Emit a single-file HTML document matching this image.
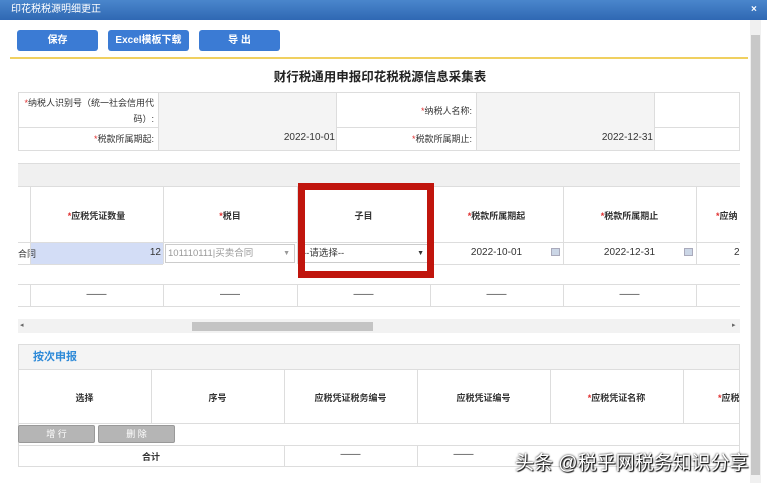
<!DOCTYPE html>
<html><head><meta charset="utf-8"><style>
*{margin:0;padding:0;box-sizing:border-box}
body{width:767px;height:483px;overflow:hidden;background:#fff;font-family:"Liberation Sans","Noto Sans CJK SC",sans-serif;font-size:10px;color:#333;position:relative}
.a{position:absolute}
.btn{position:absolute;top:30px;height:21px;background:#3b7bd4;color:#fff;border-radius:3px;text-align:center;line-height:21px;font-size:10px;font-weight:bold}
.r{color:#e03030}
.hl{position:absolute;height:1px;background:#ddd}
.v{position:absolute;width:1px;background:#ddd}
.g{position:absolute;background:#b5b5b5;border:1px solid #999;border-radius:2px;color:#fff;font-size:9px;text-align:center;line-height:16px}
</style></head><body>
<div class="a" style="left:0;top:0;width:767px;height:20px;background:linear-gradient(#4a86cc,#2f68b3);color:#fff;font-size:10px;line-height:19px;padding-left:11px">印花税税源明细更正<span class="a" style="left:751px;top:0;font-weight:bold">×</span></div>
<div class="btn" style="left:17px;width:81px">保存</div>
<div class="btn" style="left:108px;width:81px">Excel模板下载</div>
<div class="btn" style="left:199px;width:81px">导 出</div>
<div class="a" style="left:10px;top:57px;width:738px;height:2px;background:#f0d060"></div>
<div class="a" style="left:750px;top:20px;width:11px;height:463px;background:#f0f0f0"></div>
<div class="a" style="left:751px;top:35px;width:9px;height:440px;background:#c8c8c8"></div>
<div class="a" style="left:0;top:66px;width:760px;text-align:center;font-size:12.5px;font-weight:bold;color:#222">财行税通用申报印花税税源信息采集表</div>
<!-- info table -->
<div class="a" style="left:18px;top:92px;width:722px;height:59px;border:1px solid #ddd"></div>
<div class="hl" style="left:18px;top:127px;width:722px"></div>
<div class="a" style="left:158px;top:93px;width:179px;height:57px;background:#f4f4f4;border-left:1px solid #ddd;border-right:1px solid #ddd"></div>
<div class="a" style="left:476px;top:93px;width:179px;height:57px;background:#f4f4f4;border-left:1px solid #ddd;border-right:1px solid #ddd"></div>
<div class="a" style="left:20px;top:95px;width:134px;text-align:right;line-height:16px;font-size:9px"><span class="r">*</span>纳税人识别号（统一社会信用代码）:</div>
<div class="a" style="left:20px;top:132px;width:134px;text-align:right;font-size:9px"><span class="r">*</span>税款所属期起:</div>
<div class="a" style="left:340px;top:104px;width:132px;text-align:right;font-size:9px"><span class="r">*</span>纳税人名称:</div>
<div class="a" style="left:340px;top:132px;width:132px;text-align:right;font-size:9px"><span class="r">*</span>税款所属期止:</div>
<div class="a" style="left:160px;top:132px;width:175px;text-align:right;font-size:10px">2022-10-01</div>
<div class="a" style="left:478px;top:132px;width:175px;text-align:right;font-size:10px">2022-12-31</div>
<!-- main grid -->
<div class="a" style="left:18px;top:163px;width:722px;height:23px;background:#f0f0f0;border-top:1px solid #ddd"></div>
<div class="hl" style="left:18px;top:186px;width:722px"></div>
<div class="hl" style="left:18px;top:242px;width:722px"></div>
<div class="hl" style="left:430px;top:264px;width:310px"></div>
<div class="hl" style="left:18px;top:264px;width:145px"></div>
<div class="hl" style="left:18px;top:284px;width:722px"></div>
<div class="hl" style="left:18px;top:306px;width:722px"></div>
<div class="a" style="left:30px;top:243px;width:133px;height:21px;background:#d3ddf6"></div>
<div class="a" style="left:18px;top:247px;font-size:9px">合同</div>
<div class="a" style="left:30px;top:247px;width:131px;text-align:right;font-size:10px">12</div>
<div class="a" style="left:165px;top:244px;width:130px;height:19px;border:1px solid #ccc;color:#999;font-size:9.5px;line-height:17px;padding-left:2px">101110111|买卖合同<span class="a" style="right:4px;font-size:7px">▼</span></div>
<div class="a" style="left:299px;top:244px;width:130px;height:19px;border:1px solid #ccc;font-size:9.5px;line-height:17px;padding-left:3px">--请选择--<span class="a" style="right:4px;font-size:7px">▼</span></div>
<div class="a" style="left:430px;top:247px;width:133px;text-align:center;font-size:10px">2022-10-01</div>
<div class="a" style="left:563px;top:247px;width:133px;text-align:center;font-size:10px">2022-12-31</div>
<div class="a" style="left:551px;top:248px;width:9px;height:8px;background:#cbd6e6;border:1px solid #aab"></div>
<div class="a" style="left:684px;top:248px;width:9px;height:8px;background:#cbd6e6;border:1px solid #aab"></div>
<div class="a" style="left:734px;top:247px;font-size:10px">2</div>
<div class="v" style="left:30px;top:186px;height:78px"></div>
<div class="v" style="left:163px;top:186px;height:78px"></div>
<div class="v" style="left:297px;top:186px;height:78px"></div>
<div class="v" style="left:430px;top:186px;height:78px"></div>
<div class="v" style="left:563px;top:186px;height:78px"></div>
<div class="v" style="left:696px;top:186px;height:78px"></div>
<div class="v" style="left:30px;top:284px;height:22px"></div>
<div class="v" style="left:163px;top:284px;height:22px"></div>
<div class="v" style="left:297px;top:284px;height:22px"></div>
<div class="v" style="left:430px;top:284px;height:22px"></div>
<div class="v" style="left:563px;top:284px;height:22px"></div>
<div class="v" style="left:696px;top:284px;height:22px"></div>
<div class="a" style="left:30px;top:209px;width:133px;text-align:center;font-weight:bold;font-size:9px"><span class="r">*</span>应税凭证数量</div>
<div class="a" style="left:163px;top:209px;width:134px;text-align:center;font-weight:bold;font-size:9px"><span class="r">*</span>税目</div>
<div class="a" style="left:297px;top:209px;width:133px;text-align:center;font-weight:bold;font-size:9px">子目</div>
<div class="a" style="left:430px;top:209px;width:133px;text-align:center;font-weight:bold;font-size:9px"><span class="r">*</span>税款所属期起</div>
<div class="a" style="left:563px;top:209px;width:133px;text-align:center;font-weight:bold;font-size:9px"><span class="r">*</span>税款所属期止</div>
<div class="a" style="left:716px;top:209px;font-weight:bold;font-size:9px"><span class="r">*</span>应纳</div>
<div class="a" style="left:30px;top:289px;width:133px;text-align:center">——</div>
<div class="a" style="left:163px;top:289px;width:134px;text-align:center">——</div>
<div class="a" style="left:297px;top:289px;width:133px;text-align:center">——</div>
<div class="a" style="left:430px;top:289px;width:133px;text-align:center">——</div>
<div class="a" style="left:563px;top:289px;width:133px;text-align:center">——</div>
<!-- h scrollbar -->
<div class="a" style="left:18px;top:319px;width:722px;height:14px;background:#f2f2f2"></div>
<div class="a" style="left:192px;top:322px;width:181px;height:9px;background:#c4c4c4"></div>
<div class="a" style="left:20px;top:321px;font-size:7px;color:#666">◂</div>
<div class="a" style="left:732px;top:321px;font-size:7px;color:#666">▸</div>
<!-- red box -->
<div class="a" style="left:298px;top:183px;width:136px;height:95px;border:7px solid #c0150d"></div>
<!-- section 2 -->
<div class="a" style="left:18px;top:344px;width:722px;height:123px;border:1px solid #ddd"></div>
<div class="a" style="left:19px;top:345px;width:720px;height:25px;background:#f4f4f4;border-bottom:1px solid #ddd;color:#2e8ad8;font-weight:bold;font-size:11px;line-height:25px;padding-left:14px">按次申报</div>
<div class="hl" style="left:18px;top:423px;width:722px"></div>
<div class="hl" style="left:18px;top:445px;width:722px"></div>
<div class="v" style="left:151px;top:370px;height:53px"></div>
<div class="v" style="left:284px;top:370px;height:53px"></div>
<div class="v" style="left:417px;top:370px;height:53px"></div>
<div class="v" style="left:550px;top:370px;height:53px"></div>
<div class="v" style="left:683px;top:370px;height:53px"></div>
<div class="v" style="left:284px;top:445px;height:22px"></div>
<div class="v" style="left:417px;top:445px;height:22px"></div>
<div class="a" style="left:18px;top:391px;width:133px;text-align:center;font-weight:bold;font-size:9px">选择</div>
<div class="a" style="left:151px;top:391px;width:133px;text-align:center;font-weight:bold;font-size:9px">序号</div>
<div class="a" style="left:284px;top:391px;width:133px;text-align:center;font-weight:bold;font-size:9px">应税凭证税务编号</div>
<div class="a" style="left:417px;top:391px;width:133px;text-align:center;font-weight:bold;font-size:9px">应税凭证编号</div>
<div class="a" style="left:550px;top:391px;width:133px;text-align:center;font-weight:bold;font-size:9px"><span class="r">*</span>应税凭证名称</div>
<div class="a" style="left:718px;top:391px;font-weight:bold;font-size:9px"><span class="r">*</span>应税</div>
<div class="g" style="left:18px;top:425px;width:77px;height:18px">增 行</div>
<div class="g" style="left:98px;top:425px;width:77px;height:18px">删 除</div>
<div class="a" style="left:18px;top:450px;width:266px;text-align:center;font-weight:bold;font-size:9px">合计</div>
<div class="a" style="left:284px;top:449px;width:133px;text-align:center">——</div>
<div class="a" style="left:417px;top:449px;width:133px;text-align:center;padding-right:40px">——</div>
<div class="a" style="left:515px;top:448px;font-size:19px;color:#fff;text-shadow:0 0 2px #000,1px 1px 1px #000;white-space:nowrap">头条 @税乎网税务知识分享</div>
</body></html>
